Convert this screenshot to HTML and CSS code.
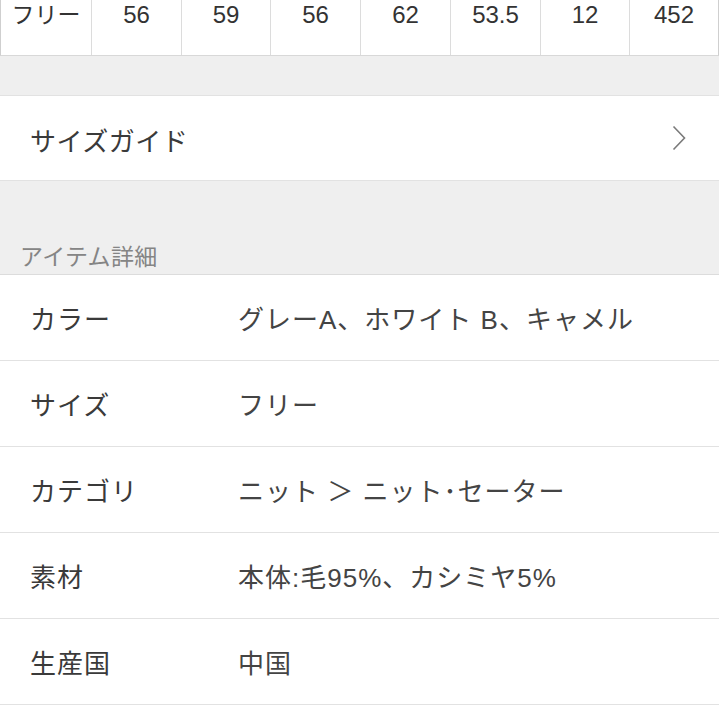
FILE: index.html
```html
<!DOCTYPE html>
<html lang="ja">
<head>
<meta charset="utf-8">
<title>アイテム詳細</title>
<link rel="stylesheet" href="styles.css">
</head>
<body>
<div class="page">
  <div class="size-table">
    <div class="cell first">フリー</div>
    <div class="cell">56</div>
    <div class="cell">59</div>
    <div class="cell">56</div>
    <div class="cell">62</div>
    <div class="cell">53.5</div>
    <div class="cell">12</div>
    <div class="cell last">452</div>
  </div>
  <div class="gap"></div>
  <div class="link-row">
    <span>サイズガイド</span>
    <svg class="chev" width="16" height="26" viewBox="0 0 16 26"><path d="M2.5 1.5 L13.5 13 L2.5 24.5" fill="none" stroke="#7a7a7a" stroke-width="1.6"/></svg>
  </div>
  <div class="section-head"><span>アイテム詳細</span></div>
  <div class="details">
    <div class="row"><div class="key">カラー</div><div class="val">グレーA、ホワイト B、キャメル</div></div>
    <div class="row"><div class="key">サイズ</div><div class="val">フリー</div></div>
    <div class="row"><div class="key">カテゴリ</div><div class="val">ニット ＞ ニット･セーター</div></div>
    <div class="row"><div class="key">素材</div><div class="val">本体:毛95%、カシミヤ5%</div></div>
    <div class="row"><div class="key">生産国</div><div class="val">中国</div></div>
    <div class="row"><div class="key"></div><div class="val"></div></div>
  </div>
</div>
</body>
</html>
```
FILE: styles.css
```css
html, body {
  margin: 0;
  padding: 0;
  background: #ffffff;
}
body {
  font-family: "Liberation Sans", "Noto Sans CJK JP", sans-serif;
  color: #3a3a3a;
  overflow: hidden;
  width: 719px;
  height: 719px;
}
.page {
  width: 719px;
}
.size-table {
  display: grid;
  grid-template-columns: 91px 90px 89px 90px 90px 90px 89px 1fr;
  height: 56px;
  border-bottom: 1px solid #d8d8d8;
  border-left: 1px solid #cfcfcf;
  border-right: 1px solid #cfcfcf;
  box-sizing: border-box;
}
.cell {
  border-right: 1px solid #dcdcdc;
  text-align: center;
  font-size: 24px;
  line-height: 28px;
  padding-top: 1px;
  color: #333;
}
.cell.first {
  font-size: 23px;
}
.cell.last {
  border-right: none;
}
.gap {
  height: 39px;
  background: #efefef;
  border-bottom: 1px solid #e2e2e2;
}
.link-row {
  height: 84px;
  display: flex;
  align-items: center;
  justify-content: space-between;
  padding: 0 32px 0 30px;
  font-size: 26px;
  color: #3a3a3a;
  background: #fff;
}
.link-row span {
  letter-spacing: 0.5px;
  padding-top: 2px;
}
.chev {
  display: block;
}
.section-head {
  height: 95px;
  background: #efefef;
  border-top: 1px solid #e2e2e2;
  border-bottom: 1px solid #dcdcdc;
  display: flex;
  align-items: flex-end;
  padding-left: 20px;
  box-sizing: border-box;
}
.section-head span {
  font-size: 23px;
  letter-spacing: 0.3px;
  color: #858585;
  line-height: 26px;
  padding-bottom: 4px;
}
.details .row {
  display: grid;
  grid-template-columns: 208px 1fr;
  height: 85px;
  align-items: center;
  padding-left: 30px;
  border-bottom: 1px solid #e2e2e2;
  font-size: 26px;
  letter-spacing: 1px;
  line-height: 30px;
}
.key {
  color: #3a3a3a;
  padding-top: 5px;
}
.val {
  color: #444;
  padding-top: 5px;
}
```
